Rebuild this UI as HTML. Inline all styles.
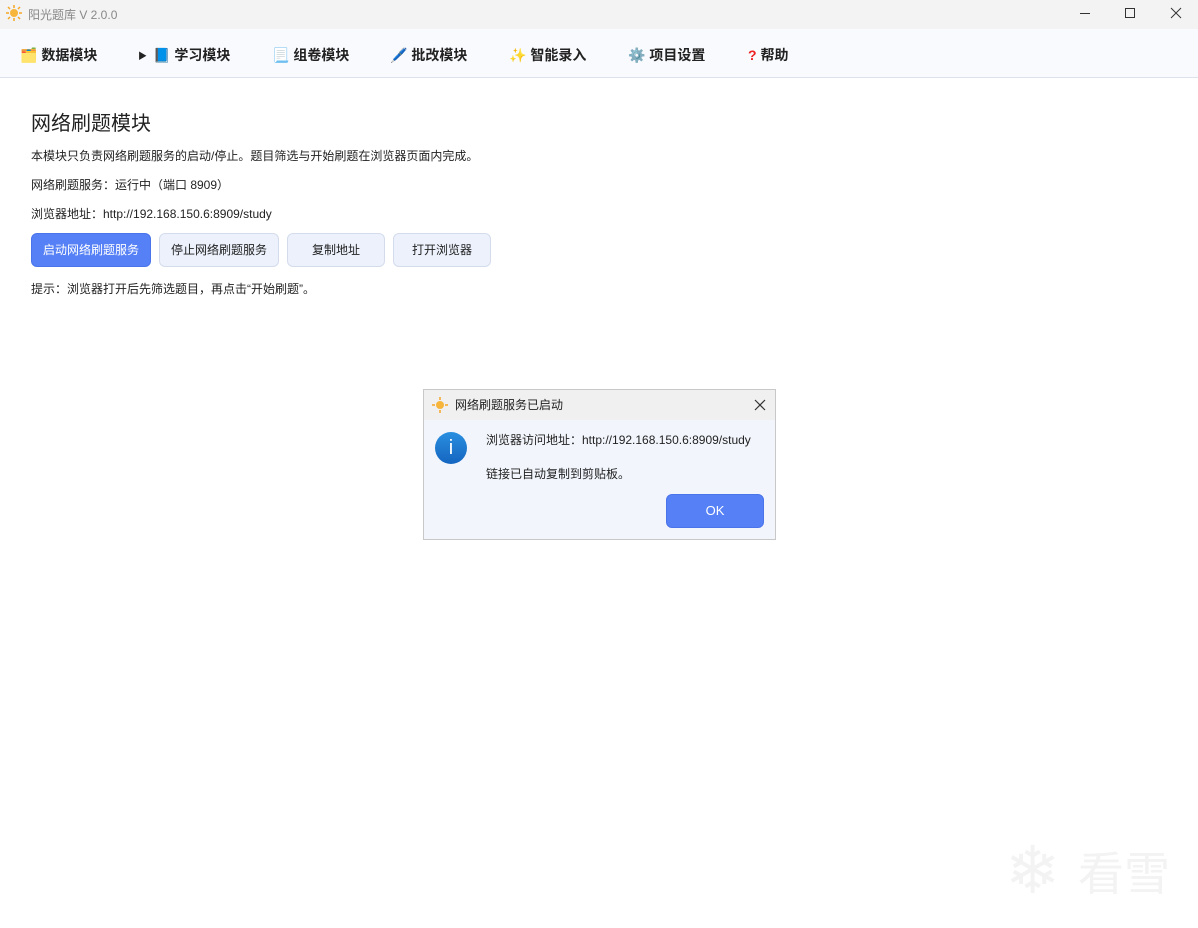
<!DOCTYPE html>
<html><head><meta charset="utf-8"><style>
*{margin:0;padding:0;box-sizing:border-box}
body{width:1198px;height:928px;background:#fff;font-family:"Liberation Sans","Noto Sans CJK SC",sans-serif;color:#222;position:relative;overflow:hidden}
.title{height:29px;background:#f3f3f3;position:relative;font-size:12px;color:#888}
.title .t{position:absolute;left:28px;top:6px}
.menu{position:absolute;top:29px;left:0;width:1198px;height:49px;background:#f8fafd;border-bottom:1px solid #dde2ea;font-size:14px;font-weight:bold;color:#222}
.menu span{position:absolute;top:16px}
h1{position:absolute;left:31px;top:107px;font-size:20px;font-weight:normal;color:#222}
.p{position:absolute;left:31px;font-size:12px;color:#222}
.btn{position:absolute;top:233px;height:34px;border:1px solid #d4dcec;background:#ecf1fc;border-radius:6px;font-size:12px;text-align:center;line-height:32px;color:#222}
.dlg{position:absolute;left:423px;top:389px;width:353px;height:151px;border:1px solid #c8c8c8;background:#f2f6fc}
.dh{height:30px;background:#f0f0f0;font-size:12px;position:relative}
</style></head><body>
<div class="title"><svg style="position:absolute;left:6px;top:5px" width="16" height="16" viewBox="0 0 16 16"><g stroke="#f5a623" stroke-width="1.5"><line x1="8" y1="0" x2="8" y2="3"/><line x1="8" y1="13" x2="8" y2="16"/><line x1="0" y1="8" x2="3" y2="8"/><line x1="13" y1="8" x2="16" y2="8"/><line x1="2" y1="2" x2="4" y2="4"/><line x1="12" y1="12" x2="14" y2="14"/><line x1="2" y1="14" x2="4" y2="12"/><line x1="12" y1="4" x2="14" y2="2"/></g><circle cx="8" cy="8" r="4" fill="#f7b53b"/></svg><span class="t">阳光题库 V 2.0.0</span>
<svg style="position:absolute;left:1075px;top:6px" width="110" height="14" viewBox="0 0 110 14"><g stroke="#333" stroke-width="1" fill="none"><line x1="5" y1="7.5" x2="15" y2="7.5"/><rect x="50.5" y="2.5" width="9" height="9"/><line x1="96" y1="2" x2="106" y2="12"/><line x1="106" y1="2" x2="96" y2="12"/></g></svg></div>
<div class="menu">
<span style="left:20px">🗂️ 数据模块</span>
<span style="left:138px;font-size:9px;top:20px">▶</span><span style="left:153px">📘 学习模块</span>
<span style="left:272px">📃 组卷模块</span>
<span style="left:390px">🖊️ 批改模块</span>
<span style="left:509px">✨ 智能录入</span>
<span style="left:628px">⚙️ 项目设置</span>
<span style="left:748px"><b style="color:#e22">?</b> 帮助</span>
</div>
<h1>网络刷题模块</h1>
<div class="p" style="top:147px">本模块只负责网络刷题服务的启动/停止。题目筛选与开始刷题在浏览器页面内完成。</div>
<div class="p" style="top:176px">网络刷题服务：运行中（端口 8909）</div>
<div class="p" style="top:205px">浏览器地址：http://192.168.150.6:8909/study</div>
<div class="btn" style="left:31px;width:120px;background:#5680f5;border-color:#4a74ea;color:#fff">启动网络刷题服务</div>
<div class="btn" style="left:159px;width:120px">停止网络刷题服务</div>
<div class="btn" style="left:287px;width:98px">复制地址</div>
<div class="btn" style="left:393px;width:98px">打开浏览器</div>
<div class="p" style="top:280px">提示：浏览器打开后先筛选题目，再点击“开始刷题”。</div>
<div class="dlg">
<div class="dh"><svg style="position:absolute;left:8px;top:7px" width="16" height="16" viewBox="0 0 16 16"><g stroke="#f5a623" stroke-width="1.5"><line x1="8" y1="0" x2="8" y2="3"/><line x1="8" y1="13" x2="8" y2="16"/><line x1="0" y1="8" x2="3" y2="8"/><line x1="13" y1="8" x2="16" y2="8"/></g><circle cx="8" cy="8" r="4" fill="#f7b53b"/></svg><span style="position:absolute;left:31px;top:6px">网络刷题服务已启动</span><svg style="position:absolute;left:330px;top:9px" width="12" height="12"><g stroke="#333" stroke-width="1.2"><line x1="1" y1="1" x2="11" y2="11"/><line x1="11" y1="1" x2="1" y2="11"/></g></svg></div>
<div style="position:absolute;left:11px;top:42px;width:32px;height:32px;border-radius:50%;background:linear-gradient(#2a8fe0,#1565c0);color:#fff;text-align:center;font:20px/32px 'Liberation Sans',sans-serif">i</div>
<div style="position:absolute;left:62px;top:41px;font-size:12px">浏览器访问地址：http://192.168.150.6:8909/study</div>
<div style="position:absolute;left:62px;top:75px;font-size:12px">链接已自动复制到剪贴板。</div>
<div style="position:absolute;left:242px;top:104px;width:98px;height:34px;background:#5680f5;border:1px solid #4a74ea;border-radius:6px;color:#fff;font-size:13px;text-align:center;line-height:32px">OK</div>
</div>
<div style="position:absolute;left:1005px;top:832px;font-size:66px;color:#f3f3f3">❄</div>
<div style="position:absolute;left:1078px;top:838px;font-size:46px;color:#f3f3f3">看雪</div>
</body></html>
